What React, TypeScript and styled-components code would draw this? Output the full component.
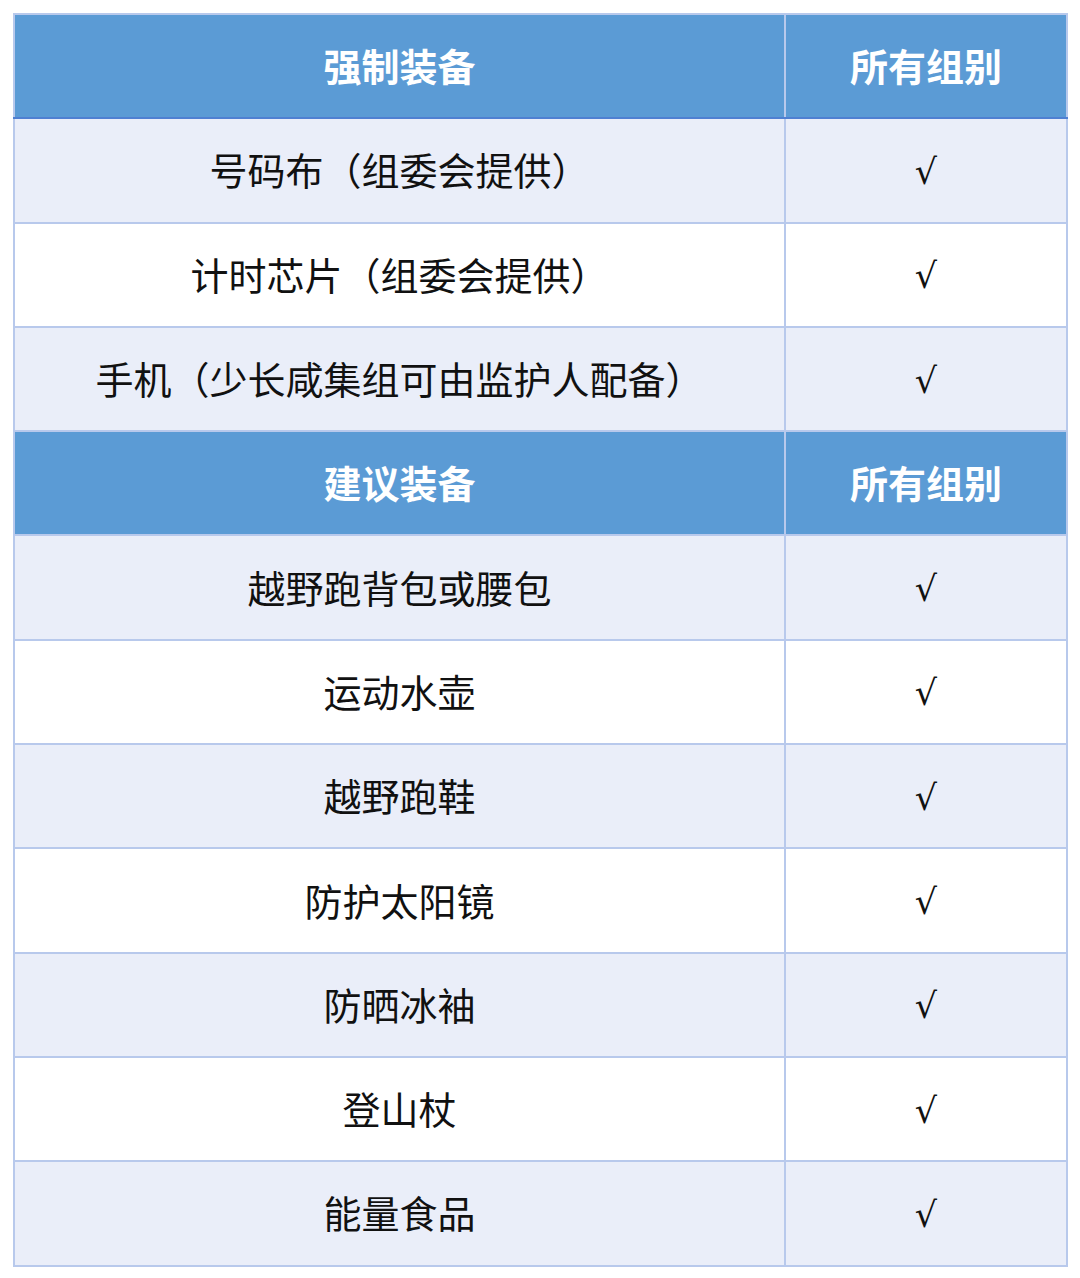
import React from "react";
import styled, { createGlobalStyle } from "styled-components";

const Global = createGlobalStyle`
  html, body { margin: 0; padding: 0; background: #ffffff; }
  body { font-family: "Noto Sans CJK SC", "Noto Sans", sans-serif; }
`;

const Page = styled.div`
  padding: 13px 13px 0 13px;
`;

const Table = styled.table`
  width: 1053px;
  border-collapse: collapse;
  table-layout: fixed;
  border: 2px solid #4a7bd0;
`;

const Row = styled.tr<{ $shade: "head" | "light" | "white" }>`
  height: 104.3px;
  background: ${(p) =>
    p.$shade === "head" ? "#5b9bd5" : p.$shade === "light" ? "#eaeef9" : "#ffffff"};
`;

const Cell = styled.td<{ $head?: boolean; $strong?: boolean }>`
  padding: 0 0 2px 0;
  text-align: center;
  vertical-align: middle;
  font-size: 38px;
  line-height: 1;
  color: ${(p) => (p.$head ? "#ffffff" : "#111111")};
  font-weight: ${(p) => (p.$head ? 700 : 400)};
  border: 2px solid #b8c9ec;
  border-bottom: ${(p) => (p.$strong ? "2px solid #4f80d2" : "2px solid #b8c9ec")};
`;

const Check = styled.span`
  font-family: "DejaVu Sans", "Noto Sans", sans-serif;
  font-size: 35px;
`;

type Item = { kind: "head"; left: string; right: string; strong?: boolean } | { kind: "item"; left: string };

const rows: Item[] = [
  { kind: "head", left: "强制装备", right: "所有组别", strong: true },
  { kind: "item", left: "号码布（组委会提供）" },
  { kind: "item", left: "计时芯片（组委会提供）" },
  { kind: "item", left: "手机（少长咸集组可由监护人配备）" },
  { kind: "head", left: "建议装备", right: "所有组别" },
  { kind: "item", left: "越野跑背包或腰包" },
  { kind: "item", left: "运动水壶" },
  { kind: "item", left: "越野跑鞋" },
  { kind: "item", left: "防护太阳镜" },
  { kind: "item", left: "防晒冰袖" },
  { kind: "item", left: "登山杖" },
  { kind: "item", left: "能量食品" },
];

export default function App() {
  let itemIndex = 0;
  return (
    <>
      <Global />
      <Page>
        <Table>
          <colgroup>
            <col style={{ width: "771px" }} />
            <col style={{ width: "282px" }} />
          </colgroup>
          <tbody>
            {rows.map((r, i) => {
              if (r.kind === "head") {
                itemIndex = 0;
                return (
                  <Row key={i} $shade="head">
                    <Cell $head $strong={r.strong}>{r.left}</Cell>
                    <Cell $head $strong={r.strong}>{r.right}</Cell>
                  </Row>
                );
              }
              const shade = itemIndex % 2 === 0 ? "light" : "white";
              itemIndex++;
              return (
                <Row key={i} $shade={shade}>
                  <Cell>{r.left}</Cell>
                  <Cell>
                    <Check>√</Check>
                  </Cell>
                </Row>
              );
            })}
          </tbody>
        </Table>
      </Page>
    </>
  );
}
